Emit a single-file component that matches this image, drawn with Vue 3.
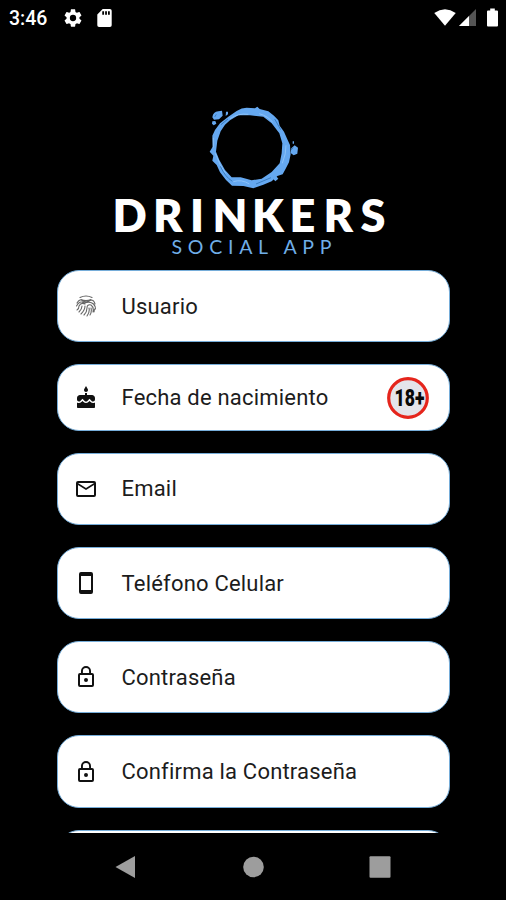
<script setup>
const fields = [
  { label: 'Usuario', icon: 'finger' },
  { label: 'Fecha de nacimiento', icon: 'cake', short: true, adult: true },
  { label: 'Email', icon: 'mail' },
  { label: 'Teléfono Celular', icon: 'phone' },
  { label: 'Contraseña', icon: 'lock' },
  { label: 'Confirma la Contraseña', icon: 'lock' },
  { label: '', icon: '' },
]
</script>

<template>
  <div class="screen">
    <header class="status">
      <span class="time">3:46</span>
      <svg class="gear" viewBox="2 2 20 20"><path fill-rule="evenodd" d="M19.14 12.94c.04-.3.06-.61.06-.94s-.02-.64-.07-.94l2.03-1.58c.18-.14.23-.41.12-.61l-1.92-3.32c-.12-.22-.37-.29-.59-.22l-2.39.96c-.5-.38-1.03-.7-1.62-.94l-.36-2.54c-.04-.24-.24-.41-.48-.41h-3.84c-.24 0-.43.17-.47.41l-.36 2.54c-.59.24-1.13.57-1.62.94l-2.39-.96c-.22-.08-.47 0-.59.22L2.74 8.87c-.12.21-.08.47.12.61l2.03 1.58c-.05.3-.09.63-.09.94s.02.64.07.94l-2.03 1.58c-.18.14-.23.41-.12.61l1.92 3.32c.12.22.37.29.59.22l2.39-.96c.5.38 1.03.7 1.62.94l.36 2.54c.05.24.24.41.48.41h3.84c.24 0 .44-.17.47-.41l.36-2.54c.59-.24 1.13-.56 1.62-.94l2.39.96c.22.08.47 0 .59-.22l1.92-3.32c.12-.22.07-.47-.12-.61zM12 15.5A3.5 3.5 0 1 1 12 8.5a3.5 3.5 0 0 1 0 7z" /></svg>
      <svg class="sd" viewBox="4 2 16 20"><path fill-rule="evenodd" d="M18 2h-8L4 8v12q0 2 2 2h12q2 0 2-2V4q0-2-2-2zM9.5 4.5h2v4h-2zM12.700 4.500h2v4h-2zM15.900 4.500h2v4h-2z" /></svg>
      <span class="grow"></span>
      <svg class="wifi" viewBox="0 0 24 18"><path d="M12 18 .3 4Q12-3.800 23.700 4z" /></svg>
      <svg class="signal" viewBox="0 0 17 17"><path class="dim" d="M17 0v17H0z" /><path d="M10 7v10H0z" /></svg>
      <svg class="battery" viewBox="0 0 11 18"><path d="M3.200 0h4.600v2H10q1 0 1 1v14q0 1-1 1H1q-1 0-1-1V3q0-1 1-1h2.200z" /></svg>
    </header>

    <main class="body">
      <svg class="logo" viewBox="100 95 300 169">
        <g transform="translate(200 95) scale(.3333)">
          <g fill="#65a8f0">
            <path fill-rule="evenodd" d="M85 65 110 48Q125 38 140 38L165 40 172 35 179 42 205 49 222 62 235 76 239 92 252 110 263 135 270 150 272 178 267 202 255 225 248 238 232 243 215 259 190 269 160 280 130 273 96 272 78 255 60 232 50 210 37 197 40 182 29 170 38 155 37 122 45 105 60 85ZM90 76 75 89 62 109 52 137 48 170 58 195 75 225 95 247 122 247 155 256 185 251 215 231 239 205 245 175 247 145 238 115 215 85 190 65 150 61 115 61Z" />
            <path d="M37 67Q39 50 55 49L66 47 68 62 57 73 42 74ZM78 50 84 50 84 58 77 63ZM37 79 46 78 49 86 41 91 36 86ZM274 160 284 151 294 158 292 176 281 181 272 174ZM278 139h4v7h-4zM218 250 229 244 235 251 226 259Z" />
          </g>
          <path fill="none" stroke="#8cc2f8" stroke-width="3" d="M90 71Q115 54 145 58M178 56Q205 64 218 82M40 128V158M46 175Q60 213 77 235M247 205Q259 175 258 151M100 260Q125 252 148 267" />
          <path fill="none" stroke="#3b7dc0" stroke-width="3" d="M63 89 84 72M61 214Q75 245 97 259M224 72 242 104M168 267 213 248M273 165 280 158M44 66 49 58" />
        </g>
        <text class="brand" y="232" x="112.500 153 190 212.500 252 289.500 323.500 360.500">DRINKERS</text>
        <text class="tagline" x="171.500" y="253.500" textLength="160">SOCIAL APP</text>
      </svg>

      <section class="fields">
        <div v-for="(f, i) in fields" :key="i" class="field" :class="{ short: f.short }">
          <svg v-if="f.icon" class="icon" viewBox="0 0 24 24">
            <g v-if="f.icon === 'finger'" fill="none" stroke="#666" stroke-width="1.100" stroke-linecap="round">
              <path d="M6 3.500q6-3 12 0M7 5.500q5 2 10 0M3 9q3-5 6-2 4 2 8-1 3 0 4 4M2.500 12q3-6 8-3 6-2 9 1 2 2 2 5M3 16q2-1 2-4 2-4 6-2M5 18q3-3 3-6M7 20q4-4 4-8M10 21q3-3 3-7 0-4 4-3 3 2 2 7M13 22q3-4 2-8M16 21q2-3 1-7M20 18l.5-3" />
            </g>
            <path v-else-if="f.icon === 'cake'" d="M12 6c1.110 0 2-.9 2-2 0-.38-.1-.73-.29-1.030L12 0l-1.710 2.970c-.19.3-.29.65-.29 1.030 0 1.100.9 2 2 2zm4.600 9.990l-1.070-1.070-1.080 1.070c-1.300 1.300-3.580 1.310-4.890 0l-1.070-1.070-1.090 1.070C6.750 16.640 5.880 17 4.960 17c-.73 0-1.400-.23-1.960-.61V21c0 .55.45 1 1 1h16c.55 0 1-.45 1-1v-4.610c-.56.38-1.230.61-1.960.61-.92 0-1.790-.36-2.440-1.010zM18 9h-5V7h-2v2H6c-1.660 0-3 1.340-3 3v1.540c0 1.080.88 1.960 1.960 1.960.52 0 1.020-.2 1.380-.57l2.140-2.130 2.130 2.130c.74.74 2.030.74 2.770 0l2.140-2.130 2.130 2.130c.37.37.86.57 1.380.57 1.080 0 1.960-.88 1.960-1.960V12c.01-1.660-1.330-3-2.990-3z" />
            <path v-else-if="f.icon === 'mail'" fill-rule="evenodd" d="M4 4h16q2 0 2 2v12q0 2-2 2H4q-2 0-2-2V6q0-2 2-2zM4 8v10h16V8l-8 5zM4 6l8 5 8-5z" />
            <path v-else-if="f.icon === 'phone'" fill-rule="evenodd" d="M7 1h10q2 0 2 2v18q0 2-2 2H7q-2 0-2-2V3q0-2 2-2zM7 5v14h10V5z" />
            <path v-else fill-rule="evenodd" d="M18 8h-1V6A5 5 0 0 0 7 6v2H6q-2 0-2 2v10q0 2 2 2h12q2 0 2-2V10q0-2-2-2zM8.900 6a3.100 3.100 0 0 1 6.200 0v2H8.900zM18 20H6V10h12zM12 17a2 2 0 1 0 0-4 2 2 0 0 0 0 4z" />
          </svg>
          <span class="label">{{ f.label }}</span>
          <svg v-if="f.adult" class="adult" viewBox="0 0 42 42">
            <circle cx="21" cy="21" r="19.300" fill="#e4e4ea" stroke="#e5251c" stroke-width="3.200" />
            <text x="7.500" y="29" textLength="30" lengthAdjust="spacingAndGlyphs">18+</text>
          </svg>
        </div>
      </section>
    </main>

    <nav class="nav">
      <svg viewBox="0 0 24 24"><path d="M1.500 12 21 1v22z" /></svg>
      <svg viewBox="0 0 24 24"><circle cx="12.500" cy="12" r="10.300" /></svg>
      <svg viewBox="0 0 24 24"><rect x="1.500" y="1.300" width="21" height="21.500" rx="1" /></svg>
    </nav>
  </div>
</template>

<style>
body { background: #000; }
</style>

<style scoped>
.screen { width: 506px; height: 900px; display: flex; flex-direction: column; background: #000; overflow: hidden; font-family: Roboto, sans-serif; }
.status { height: 36px; flex: none; display: flex; align-items: center; padding: 0 8px 1px 9px; box-sizing: border-box; color: #fff; }
.status svg { fill: #fff; flex: none; }
.status .dim { fill: #555; }
.time { font-size: 19.500px; font-weight: 500; width: 55px; padding-top: 1px; }
.gear { width: 18px; height: 18px; }
.sd { width: 15px; height: 18px; margin-left: 15px; }
.grow { flex: 1; }
.wifi { width: 22px; height: 17px; }
.signal { width: 17px; height: 17px; margin-left: 3px; }
.battery { width: 11px; height: 19px; margin-left: 11px; }
.body { height: 797px; flex: none; overflow: hidden; display: flex; flex-direction: column; padding-top: 59px; box-sizing: border-box; }
.logo { width: 300px; height: 169px; margin-left: 100px; flex: none; }
.brand { font: 800 45px Lato, sans-serif; fill: #fff; }
.tagline { font: 400 19.500px Lato, sans-serif; fill: #6faee8; }
.fields { display: flex; flex-direction: column; gap: 22px; padding: 6.200px 56px 0 56.500px; }
.field { height: 72.200px; flex: none; box-sizing: border-box; border: 1.500px solid #76add9; border-radius: 22px; background: #fff; display: flex; align-items: center; padding: 0 20px 0 17px; }
.field.short { height: 66.500px; }
.icon { width: 24px; height: 24px; fill: #111; margin: 0 23.500px 0 -.5px; flex: none; }
.label { flex: 1; font-size: 22px; letter-spacing: .2px; color: #1c1c1c; white-space: nowrap; }
.adult { width: 42px; height: 42px; flex: none; overflow: visible; }
.adult text { font: 900 23px Roboto, sans-serif; fill: #080808; }
.nav { flex: 1; display: flex; justify-content: space-between; align-items: center; padding: 0 114px; }
.nav svg { width: 24px; height: 24px; fill: #9d9d9d; }
</style>
